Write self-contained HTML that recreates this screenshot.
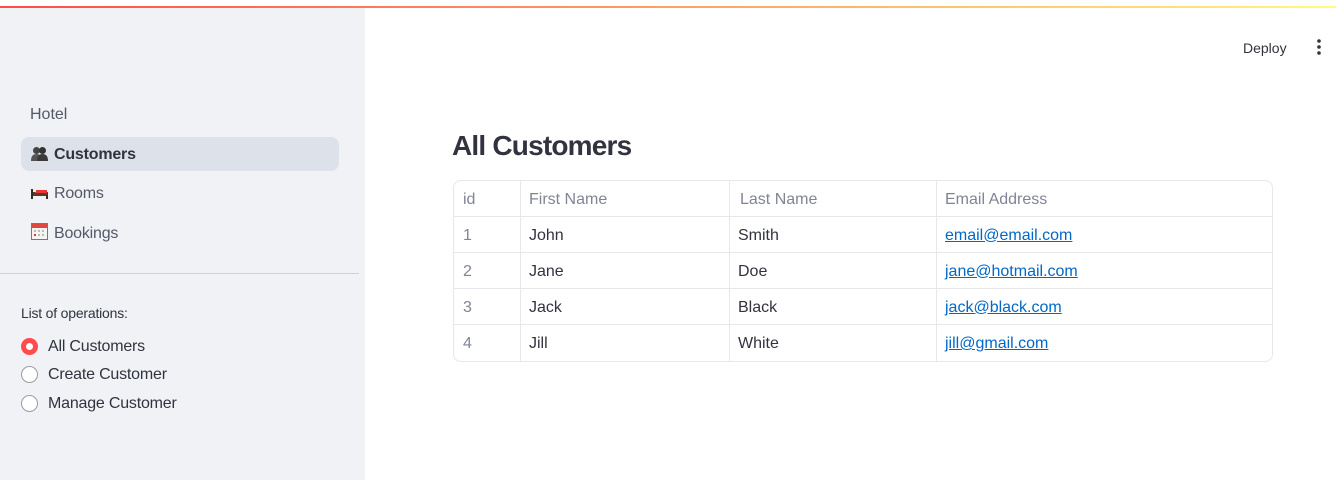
<!DOCTYPE html>
<html><head><style>
*{box-sizing:border-box;margin:0;padding:0}
body{width:1336px;height:480px;overflow:hidden;font-family:"Liberation Sans",sans-serif;color:#31333f;background:#fff;position:relative}
.bar{position:absolute;top:6px;left:0;width:1336px;height:2px;background:linear-gradient(90deg,#ff4b4b,#ffe27a 90%,#fffd80)}
.side{position:absolute;top:8px;left:0;width:365px;height:472px;background:#f0f2f6}
.t{position:absolute;white-space:nowrap}
.nav{position:absolute;left:21px;width:318px;height:34px;border-radius:8px;font-size:16px;color:#31333f;padding-left:10px;line-height:36px;letter-spacing:-0.2px}
.sel{background:#dde1ea;font-weight:bold}
.ic{display:inline-block;width:17px;height:15px;vertical-align:-2px;margin-right:6px}
.hr{position:absolute;left:0;top:273px;width:359px;height:1px;background:#d0d2d8}
.rad{position:absolute;left:21px;width:17px;height:17px;border-radius:50%;border:1px solid #9a9ca3;background:#fff}
.on{background:#ff4b4b;border:none}
.on:after{content:"";position:absolute;left:5px;top:5px;width:7px;height:7px;border-radius:50%;background:#fff}
.rl{position:absolute;left:48px;font-size:16px;letter-spacing:-0.2px}
table{position:absolute;left:453px;top:180px;width:820px;border-collapse:separate;border-spacing:0;border:1px solid #e6e7ea;border-radius:8px;font-size:16px}
td{height:36px;border-right:1px solid #e6e7ea;border-bottom:1px solid #e6e7ea;padding-left:8px;padding-top:2px}
td:last-child{border-right:none}
tr:last-child td{border-bottom:none}
.h td{color:#808495}
td.i{color:#808495;padding-left:9px}
a{color:#0068c9;text-decoration:underline}
</style></head><body>
<div class="bar"></div>
<div class="side">
</div>
<div class="t" style="left:30px;top:106px;font-size:16px;color:#555866">Hotel</div>
<div class="nav sel" style="top:137px"><span class="ic"><svg width="17" height="15"><circle cx="5.5" cy="4.5" r="3.5" fill="#444"/><circle cx="11.5" cy="4.5" r="3.5" fill="#333"/><path d="M0 15 Q0 8 5.5 8 Q11 8 11 15Z" fill="#555"/><path d="M6 15 Q6 8 11.5 8 Q17 8 17 15Z" fill="#3a3a3a"/></svg></span>Customers</div>
<div class="nav" style="top:176px;color:#555866"><span class="ic"><svg width="17" height="15"><rect x="0" y="4" width="2" height="10" fill="#3b2a20"/><rect x="2" y="7" width="15" height="4" fill="#5a3a28"/><rect x="4" y="5" width="12" height="3" fill="#e33"/><rect x="2" y="5" width="3" height="2" fill="#eee"/><rect x="15" y="10" width="2" height="4" fill="#3b2a20"/></svg></span>Rooms</div>
<div class="nav" style="top:216px;color:#555866"><span class="ic"><svg width="17" height="17"><rect x="0.5" y="0.5" width="16" height="16" fill="#f4f4f4" stroke="#777"/><rect x="1" y="1" width="15" height="4" fill="#e0483e"/><g fill="#bbb"><rect x="3" y="7" width="2" height="2"/><rect x="7" y="7" width="2" height="2"/><rect x="11" y="7" width="2" height="2"/><rect x="7" y="11" width="2" height="2"/><rect x="11" y="11" width="2" height="2"/></g><rect x="3" y="11" width="2" height="2" fill="#e33"/></svg></span>Bookings</div>
<div class="hr"></div>
<div class="t" style="left:21px;top:305px;font-size:14px;letter-spacing:-0.2px">List of operations:</div>
<div class="rad on" style="top:338px"></div><div class="rl" style="top:338px">All Customers</div>
<div class="rad" style="top:366px"></div><div class="rl" style="top:366px">Create Customer</div>
<div class="rad" style="top:395px"></div><div class="rl" style="top:395px">Manage Customer</div>
<div class="t" style="left:1243px;top:40px;font-size:14px">Deploy</div>
<svg class="t" style="left:1315px;top:38px" width="8" height="18"><circle cx="4" cy="3" r="1.8" fill="#31333f"/><circle cx="4" cy="9" r="1.8" fill="#31333f"/><circle cx="4" cy="15" r="1.8" fill="#31333f"/></svg>
<div class="t" style="left:452px;top:130px;font-size:28px;font-weight:bold;letter-spacing:-0.8px">All Customers</div>
<table>
<tr class="h"><td style="width:67px;padding-left:9px">id</td><td style="width:209px">First Name</td><td style="width:207px;padding-left:10px">Last Name</td><td>Email Address</td></tr>
<tr><td class="i">1</td><td>John</td><td>Smith</td><td><a>email@email.com</a></td></tr>
<tr><td class="i">2</td><td>Jane</td><td>Doe</td><td><a>jane@hotmail.com</a></td></tr>
<tr><td class="i">3</td><td>Jack</td><td>Black</td><td><a>jack@black.com</a></td></tr>
<tr><td class="i">4</td><td>Jill</td><td>White</td><td><a>jill@gmail.com</a></td></tr>
</table>
</body></html>
